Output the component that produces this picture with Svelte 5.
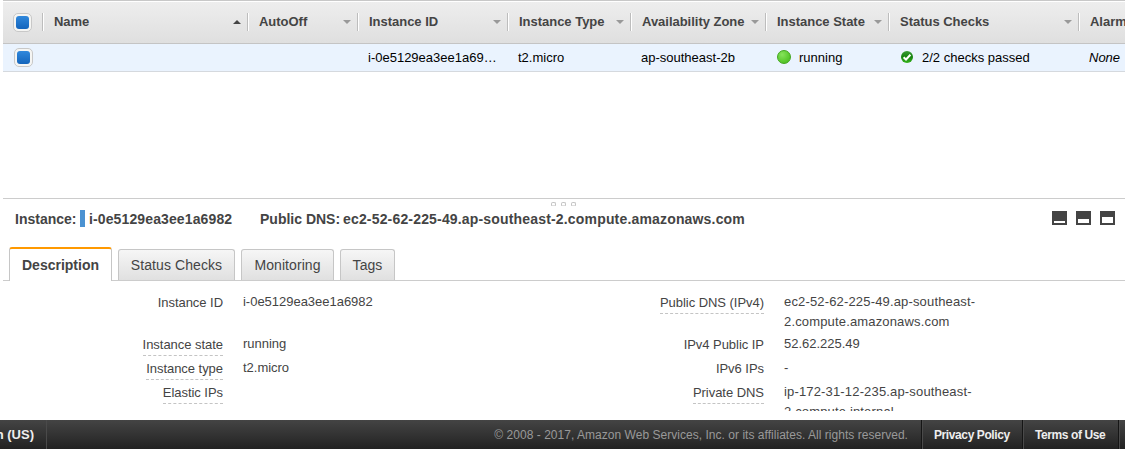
<script>
  const columns = [
    { title: 'Name', width: 205, sorted: true },
    { title: 'AutoOff', width: 110 },
    { title: 'Instance ID', width: 150 },
    { title: 'Instance Type', width: 123 },
    { title: 'Availability Zone', width: 135 },
    { title: 'Instance State', width: 123 },
    { title: 'Status Checks', width: 190 },
    { title: 'Alarm Status', width: 150 }
  ];
  const tabs = [
    { title: 'Description', width: 103 },
    { title: 'Status Checks', width: 117 },
    { title: 'Monitoring', width: 93 },
    { title: 'Tags', width: 55 }
  ];
  const left = [
    { label: 'Instance ID', value: 'i-0e5129ea3ee1a6982', tall: true },
    { label: 'Instance state', value: 'running', hint: true },
    { label: 'Instance type', value: 't2.micro', hint: true },
    { label: 'Elastic IPs', value: '', hint: true }
  ];
  const right = [
    { label: 'Public DNS (IPv4)', value: 'ec2-52-62-225-49.ap-southeast-2.compute.amazonaws.com', hint: true, tall: true, wide: true },
    { label: 'IPv4 Public IP', value: '52.62.225.49' },
    { label: 'IPv6 IPs', value: '-' },
    { label: 'Private DNS', value: 'ip-172-31-12-235.ap-southeast-2.compute.internal', hint: true, tall: true, wide: true }
  ];
  const paneIcons = [10, 8, 6];
</script>

<div class="page">
  <section class="grid">
    <div class="head">
      <div class="select"><span class="check"></span></div>
      {#each columns as c}
        <div class="col" style="width:{c.width}px">
          <span>{c.title}</span>
          <i class="arrow" class:up={c.sorted}></i>
        </div>
      {/each}
    </div>
    <div class="row">
      <div class="select"><span class="check"></span></div>
      <div class="cell" style="width:205px"></div>
      <div class="cell" style="width:110px"></div>
      <div class="cell" style="width:150px">i-0e5129ea3ee1a69…</div>
      <div class="cell" style="width:123px">t2.micro</div>
      <div class="cell" style="width:135px">ap-southeast-2b</div>
      <div class="cell state" style="width:123px"><span class="dot"></span>running</div>
      <div class="cell checks" style="width:190px">
        <svg width="12" height="12" viewBox="0 0 12 12">
          <defs>
            <linearGradient id="ok" x1="0" y1="0" x2="0" y2="1">
              <stop offset="0" stop-color="#3a9c35" />
              <stop offset="0.5" stop-color="#16820f" />
              <stop offset="1" stop-color="#36b51c" />
            </linearGradient>
          </defs>
          <circle cx="6" cy="6" r="6" fill="url(#ok)" />
          <path d="M2.6 6.2 L5 8.5 L9.4 3.7" fill="none" stroke="#fff" stroke-width="2" />
        </svg>
        2/2 checks passed
      </div>
      <div class="cell" style="width:150px"><em>None</em></div>
    </div>
  </section>

  <section class="details">
    <div class="grip"><i></i><i></i><i></i></div>
    <div class="title">
      <span class="name">Instance:</span>
      <span class="bar"></span>
      <span class="id">i-0e5129ea3ee1a6982</span>
      <span class="key">Public DNS:</span>
      <span class="dns">ec2-52-62-225-49.ap-southeast-2.compute.amazonaws.com</span>
      <div class="panes">
        {#each paneIcons as y}
          <svg width="15" height="14" viewBox="0 0 15 14" shape-rendering="crispEdges">
            <path fill="#444" d="M0 0H15V14H0Z" />
            <path fill="#fff" d="M2 {y}H13V12H2Z" />
          </svg>
        {/each}
      </div>
    </div>
    <div class="tabs">
      {#each tabs as t, i}
        <div class="tab" class:active={i === 0} style="width:{t.width}px">{t.title}</div>
      {/each}
    </div>
    <div class="info">
      {#each [left, right] as list}
        <div class="list">
          {#each list as f}
            <div class="field" class:tall={f.tall}>
              <div class="label"><span class:hint={f.hint}>{f.label}</span></div>
              <div class="value" class:wide={f.wide}>{f.value}</div>
            </div>
          {/each}
        </div>
      {/each}
    </div>
  </section>

  <footer>
    <div class="lang"><span>English (US)</span></div>
    <div class="copy">© 2008 - 2017, Amazon Web Services, Inc. or its affiliates. All rights reserved.</div>
    <div class="link privacy">Privacy Policy</div>
    <div class="link terms">Terms of Use</div>
    <div class="link rest"></div>
  </footer>
</div>

<style>
  :global(body) { margin: 0; background: #fff; overflow: hidden; }
  .page {
    width: 1125px; height: 449px; overflow: hidden; display: flex; flex-direction: column;
    font: 13px/16px "Liberation Sans", Arial, sans-serif; color: #444; white-space: nowrap;
  }
  .page * { box-sizing: border-box; }
  .grid { height: 198px; margin-left: 3px; overflow: hidden; flex: none; }
  .head {
    display: flex; width: 1300px; height: 44px; border-top: 1px solid #c8c8c8; border-bottom: 1px solid #c4c4c4;
    background: linear-gradient(#eee, #dfdfdf); box-shadow: inset 0 1px #fff; font-weight: bold;
  }
  .select { width: 39px; flex: none; padding: 12px 0 0 10px; }
  .row .select { padding: 4px 0 0 11px; }
  .check {
    display: block; width: 19px; height: 19px; border: 1px solid #c8c8c8; border-radius: 5px;
    background: #f5f5f3; padding: 2px;
  }
  .check::after {
    content: ""; display: block; width: 13px; height: 13px; border-radius: 3px;
    background: linear-gradient(#3088dc, #1465bc);
  }
  .col {
    flex: none; display: flex; justify-content: space-between; align-items: center; height: 18px; margin-top: 12px;
    padding: 0 6px 0 11px; border-left: 1px solid #bdbdbd; box-shadow: inset 1px 0 #fff; letter-spacing: -0.02px;
  }
  .arrow { border: 4px solid transparent; border-top-color: #999; border-bottom: 0; }
  .arrow.up { border-top: 0; border-bottom: 4px solid #444; }
  .row { display: flex; width: 1300px; height: 28px; background: #eaf3fe; border-bottom: 1px solid #d5d9de; color: #000; }
  .cell { flex: none; padding-left: 11px; line-height: 27px; }
  .state, .checks { display: flex; align-items: center; padding-left: 12px; }
  .dot {
    width: 14px; height: 14px; border-radius: 50%; margin: -2px 8px 0 0; border: 1px solid #40a51c;
    background: radial-gradient(circle at 35% 30%, #86e35b, #5cca30 60%, #45b51f);
  }
  .checks svg { margin: -1px 9px 0 1px; }
  .details { height: 222px; margin-left: 3px; flex: none; border-top: 1px solid #ccc; display: flex; flex-direction: column; }
  .grip { height: 11px; display: flex; gap: 5px; padding: 3px 0 0 548px; flex: none; }
  .grip i { width: 5px; height: 4px; border: 1px solid #c4c4c4; border-bottom-color: #ddd; border-radius: 2px 2px 0 0; }
  .title { display: flex; height: 37px; font-weight: bold; font-size: 14px; line-height: 18px; padding-left: 12px; flex: none; }
  .name { width: 65px; }
  .bar { width: 5px; height: 17px; background: #4b92d2; }
  .id { margin-left: 4px; width: 171px; letter-spacing: 0.12px; }
  .key { width: 83px; }
  .dns { flex: 1; letter-spacing: 0.17px; }
  .panes { display: flex; gap: 9px; padding: 1px 10px 0 0; }
  .tabs { display: flex; align-items: flex-end; gap: 6px; height: 34px; padding-left: 6px; border-bottom: 1px solid #ccc; flex: none; }
  .tab {
    height: 31px; text-align: center; border: 1px solid #c6c6c6; border-bottom: 0; border-radius: 3px 3px 0 0;
    background: linear-gradient(#f6f6f6, #e0e0e0); font-size: 14px; line-height: 30px; letter-spacing: 0.08px;
  }
  .tab.active {
    height: 34px; margin-bottom: -1px; border-top: 2px solid #f90; background: #fff; font-weight: bold; line-height: 32px; letter-spacing: 0;
  }
  .info { display: flex; margin-top: 11px; height: 119px; overflow: hidden; line-height: 20px; flex: none; }
  .list { width: 541px; flex: none; }
  .field { display: grid; grid-template-columns: 220px 205px; column-gap: 20px; min-height: 24px; }
  .field.tall { min-height: 42px; }
  .label { text-align: right; line-height: 20px; padding-top: 1px; letter-spacing: -0.04px; }
  .label .hint { display: inline-block; height: 21px; border-bottom: 1px dashed #c4c4c4; }
  .value { white-space: normal; letter-spacing: -0.02px; }
  .value.wide { letter-spacing: 0.16px; }
  footer {
    height: 29px; flex: none; display: flex; background: linear-gradient(#444, #222); color: #999;
    font-size: 12px; line-height: 30px;
  }
  .lang { width: 47px; flex: none; display: flex; justify-content: flex-end; padding-right: 12px; border-right: 1px solid #4a4a4a; color: #eee; font-weight: bold; font-size: 13px; }
  .copy { width: 874px; flex: none; padding-right: 13px; text-align: right; letter-spacing: 0.03px; }
  .link { flex: none; color: #eee; font-weight: bold; border-left: 1px solid #151515; box-shadow: inset 1px 0 #4a4a4a; padding-left: 12px; letter-spacing: -0.4px; }
  .privacy { width: 101px; }
  .terms { width: 96px; }
  .rest { width: 10px; }
</style>
